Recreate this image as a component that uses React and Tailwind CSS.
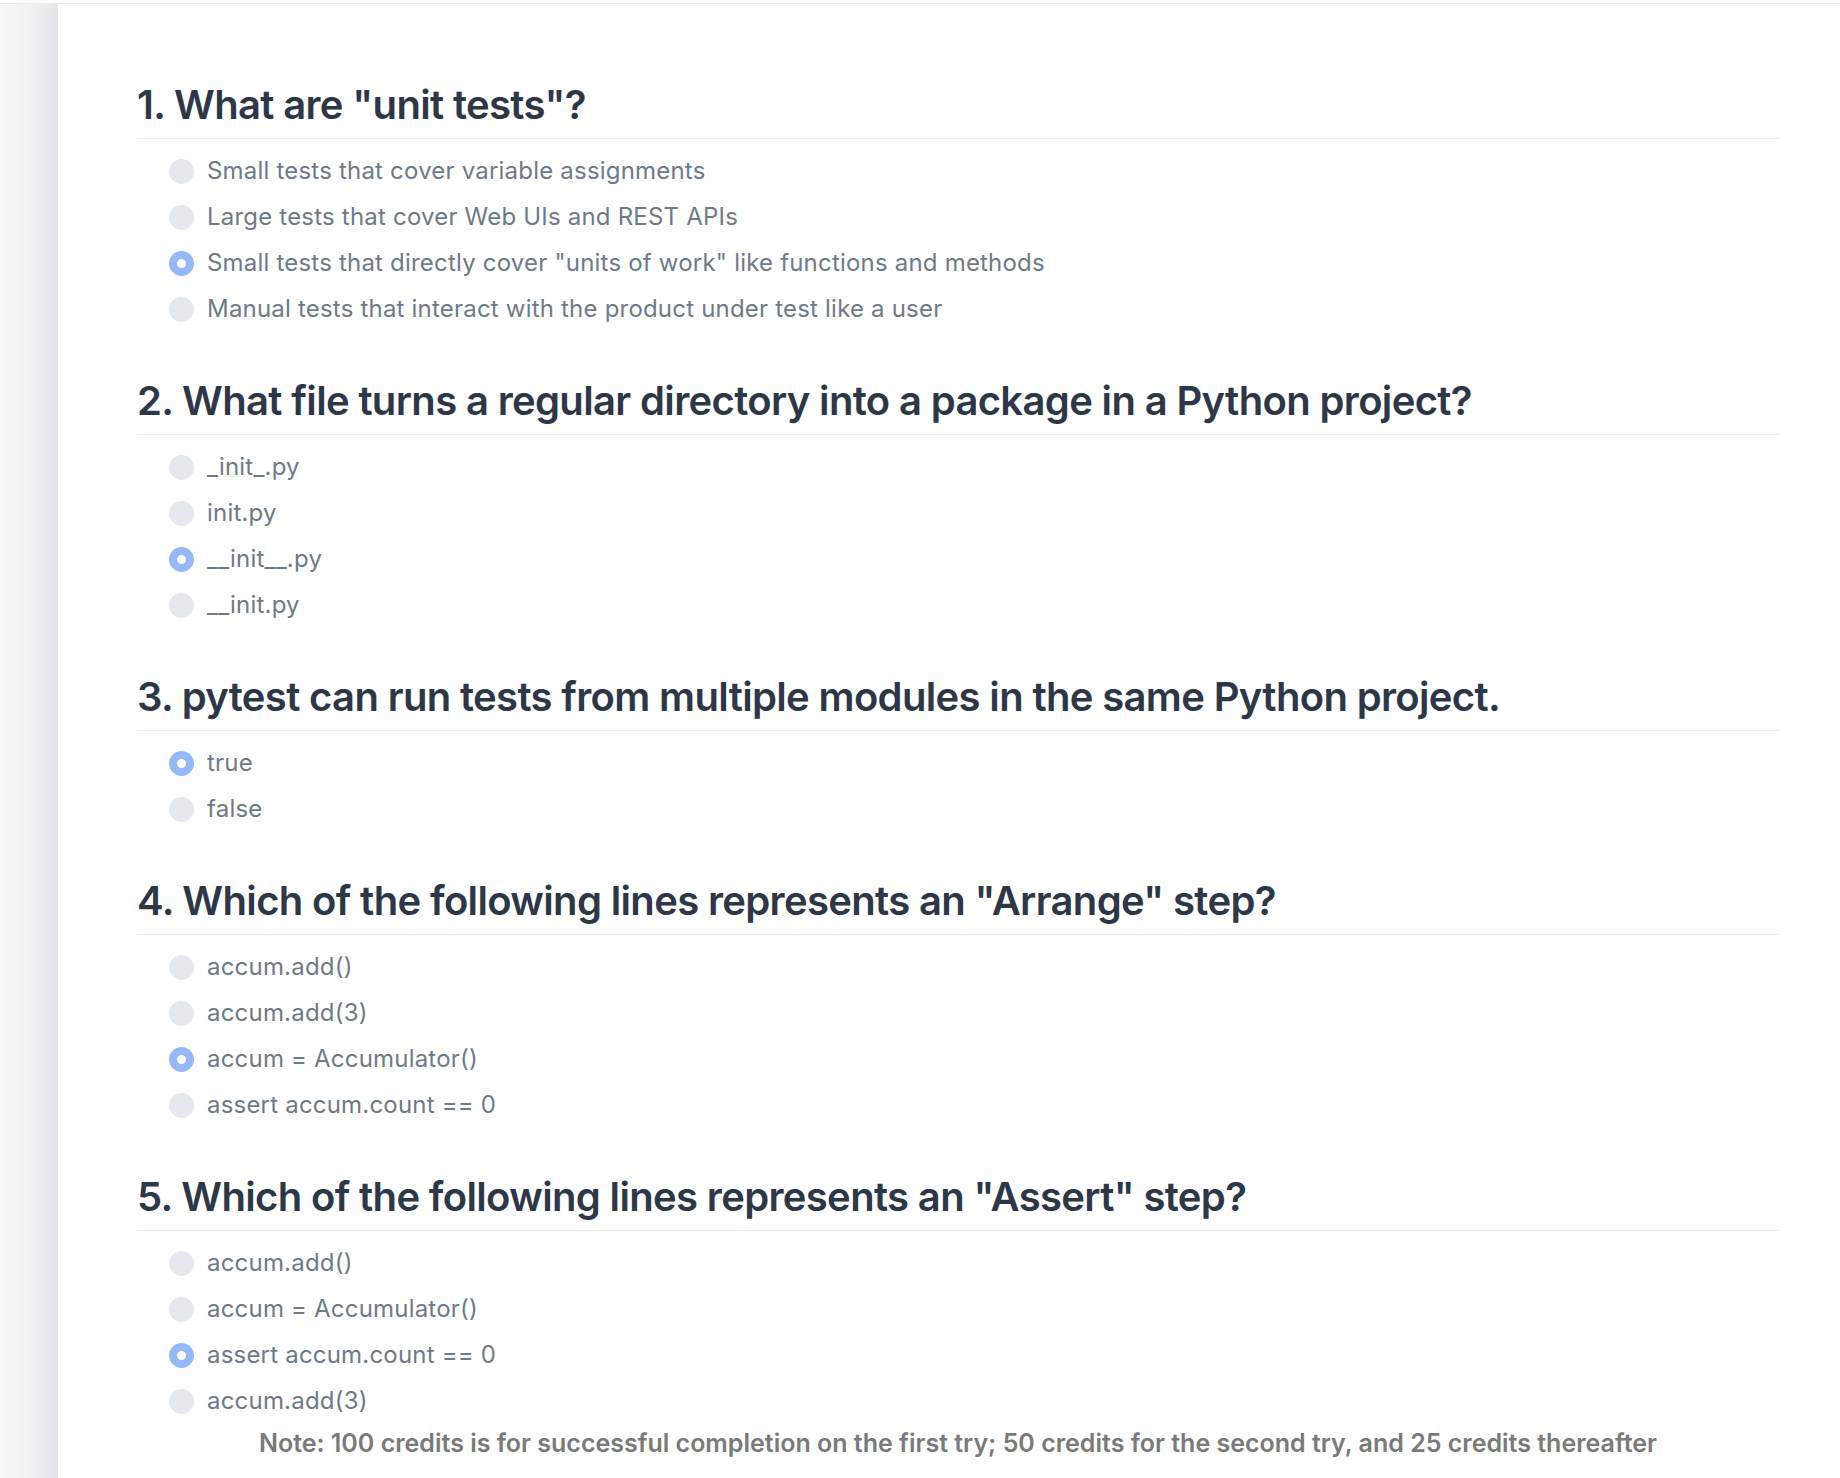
const questions = [
  {
    title: '1. What are "unit tests"?',
    options: [
      "Small tests that cover variable assignments",
      "Large tests that cover Web UIs and REST APIs",
      'Small tests that directly cover "units of work" like functions and methods',
      "Manual tests that interact with the product under test like a user",
    ],
    selected: 2,
  },
  {
    title: "2. What file turns a regular directory into a package in a Python project?",
    options: ["_init_.py", "init.py", "__init__.py", "__init.py"],
    selected: 2,
  },
  {
    title: "3. pytest can run tests from multiple modules in the same Python project.",
    options: ["true", "false"],
    selected: 0,
  },
  {
    title: '4. Which of the following lines represents an "Arrange" step?',
    options: ["accum.add()", "accum.add(3)", "accum = Accumulator()", "assert accum.count == 0"],
    selected: 2,
  },
  {
    title: '5. Which of the following lines represents an "Assert" step?',
    options: ["accum.add()", "accum = Accumulator()", "assert accum.count == 0", "accum.add(3)"],
    selected: 2,
  },
];

function Radio({ checked }) {
  if (checked) {
    return <span className="h-[25px] w-[25px] shrink-0 rounded-full border-[8px] border-[#94b8fa] bg-white" />;
  }
  return <span className="h-[25px] w-[25px] shrink-0 rounded-full bg-[#e5e8ec]" />;
}

function Question({ q, first }) {
  return (
    <section className={first ? "" : "mt-[45px]"}>
      <h2 className="border-b border-[#eaecef] pb-[9px] text-[40px] leading-[48px] font-semibold tracking-[-0.65px] text-[#2d3748]">
        {q.title}
      </h2>
      <ul className="pt-[9px] pl-[32px]">
        {q.options.map((opt, i) => (
          <li key={i} className="flex h-[46px] items-center gap-[13px]">
            <Radio checked={i === q.selected} />
            <span className="text-[24px] leading-[30px] tracking-[0.2px] text-[#6f7a89]">{opt}</span>
          </li>
        ))}
      </ul>
    </section>
  );
}

export default function App() {
  return (
    <div className="bg-white pt-[3px] font-[Inter,sans-serif]">
      <div className="flex min-h-[1475px] border-t border-[#e6e8eb]">
        <aside className="w-[58px] shrink-0 bg-linear-to-r from-[#f7f8fa] via-[#f1f2f4] to-[#e3e5e8]" />
        <main className="flex-1 pt-[77px] pr-[61px] pl-[79px]">
          {questions.map((q, i) => (
            <Question key={i} q={q} first={i === 0} />
          ))}
          <p className="mt-[5px] text-center text-[25px] leading-[28px] font-semibold text-[#7a7a7a]">
            Note: 100 credits is for successful completion on the first try; 50 credits for the second try, and 25 credits thereafter
          </p>
        </main>
      </div>
    </div>
  );
}
